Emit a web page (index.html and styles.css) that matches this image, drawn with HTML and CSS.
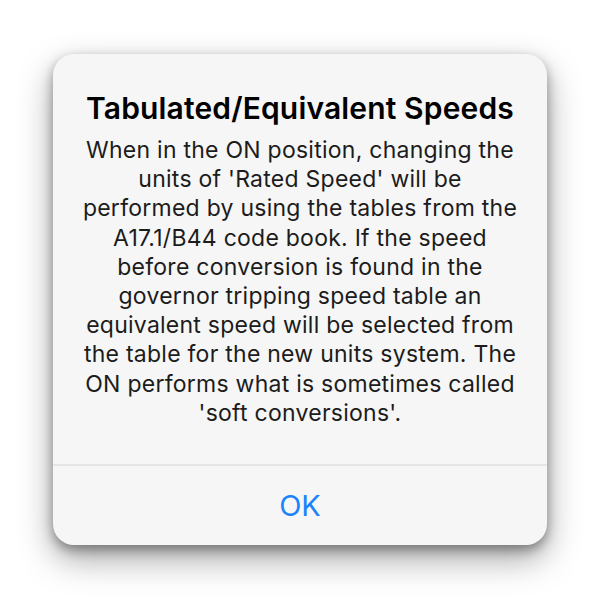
FILE: index.html
```html
<!DOCTYPE html>
<html>
<head>
<meta charset="utf-8">
<link rel="stylesheet" href="styles.css">
</head>
<body>
<div class="stage">
  <div class="alert">
    <div class="content">
      <h1 class="title">Tabulated/Equivalent Speeds</h1>
      <p class="message">When in the ON position, changing the<br>units of 'Rated Speed' will be<br>performed by using the tables from the<br>A17.1/B44 code book. If the speed<br>before conversion is found in the<br>governor tripping speed table an<br>equivalent speed will be selected from<br>the table for the new units system. The<br>ON performs what is sometimes called<br>'soft conversions'.</p>
    </div>
    <div class="actions">
      <button class="btn">OK</button>
    </div>
  </div>
</div>
</body>
</html>
```
FILE: styles.css
```css
html, body {
  margin: 0;
  padding: 0;
  background: #ffffff;
}
.stage {
  width: 600px;
  height: 600px;
  display: flex;
  justify-content: center;
  padding-top: 54px;
  box-sizing: border-box;
}
.alert {
  width: 494px;
  height: 491px;
  background: #f6f6f6;
  border-radius: 21px;
  box-shadow: 0 5px 12px rgba(0, 0, 0, 0.35), 0 14px 34px rgba(0, 0, 0, 0.35);
  display: flex;
  flex-direction: column;
  overflow: hidden;
  font-family: Inter, "Noto Sans", sans-serif;
}
.content {
  flex: 1;
  padding: 37px 8px 0;
  text-align: center;
  border-bottom: 2px solid #e6e6e6;
}
.title {
  margin: 0 0 10px;
  font-size: 30px;
  font-weight: 600;
  color: #000;
  line-height: 35px;
  letter-spacing: 0.15px;
}
.message {
  margin: 0;
  font-size: 23px;
  line-height: 29.2px;
  letter-spacing: 0.25px;
  color: #1c1c1c;
}
.actions {
  flex: 0 0 79px;
  display: flex;
  align-items: center;
  justify-content: center;
}
.btn {
  border: none;
  background: none;
  font-family: inherit;
  font-size: 29px;
  color: #1a84fb;
  padding: 0;
}
```
